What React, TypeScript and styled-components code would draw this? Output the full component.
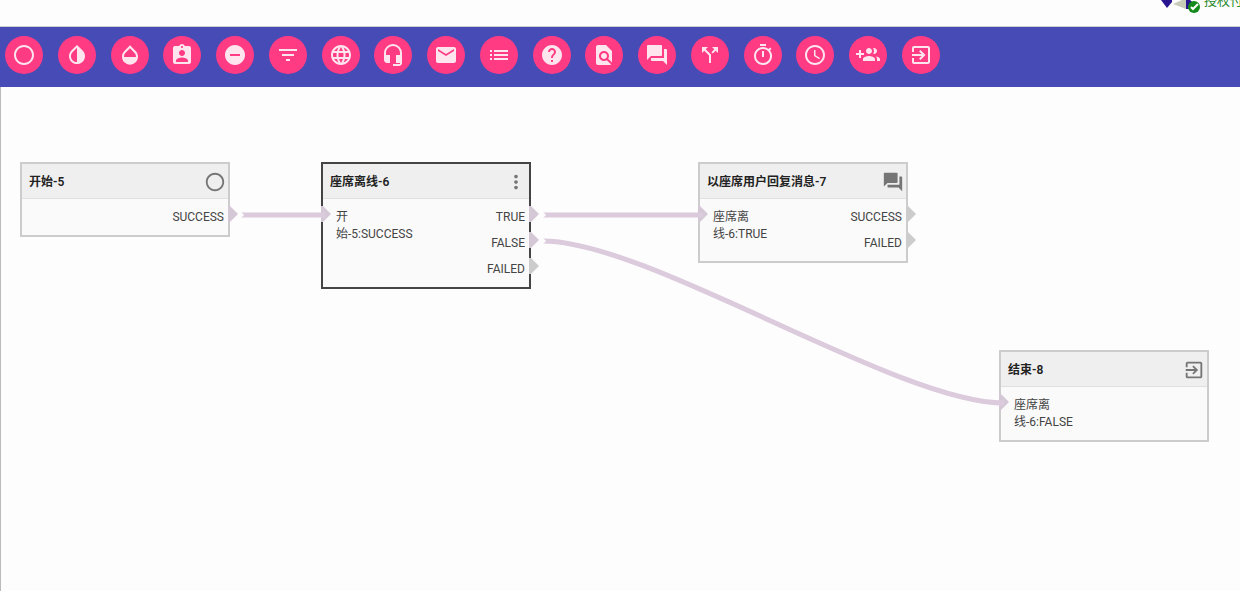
import React from "react";
import styled, { createGlobalStyle } from "styled-components";
import type { IconType } from "react-icons";
import {
  MdAssignmentInd,
  MdCallSplit,
  MdEmail,
  MdExitToApp,
  MdFilterList,
  MdFindInPage,
  MdHeadsetMic,
  MdHelp,
  MdInvertColors,
  MdLanguage,
  MdList,
  MdMoreVert,
  MdOpacity,
  MdOutlineTimer,
  MdPanoramaFishEye,
  MdQuestionAnswer,
  MdRemoveCircle,
  MdSchedule,
} from "react-icons/md";

const GlobalStyle = createGlobalStyle`
  * { box-sizing: border-box; }
  body {
    margin: 0;
    background: #fdfdfd;
    color: #444;
    font: 12px/17px Roboto, "Noto Sans CJK SC", sans-serif;
  }
`;

const Page = styled.div`
  display: flex;
  flex-direction: column;
  min-height: 100vh;
`;

const Header = styled.header`
  display: flex;
  justify-content: flex-end;
  height: 27px;
  overflow: hidden;
  border-bottom: 1px solid #cfcfcf;
`;

const Account = styled.div`
  display: flex;
  align-items: flex-start;
  width: 80px;
  overflow: hidden;
  white-space: nowrap;
`;

const Logo = styled.svg`
  flex: none;
  width: 44px;
  height: 14px;
`;

const License = styled.a`
  flex: none;
  margin-top: -8px;
  color: #2c8a2c;
  font-size: 13px;
  text-decoration: none;
`;

const Toolbar = styled.nav`
  background: #464bb5;
  padding: 9px 5px 13px;
`;

const Tools = styled.div`
  display: flex;
  justify-content: space-between;
  max-width: 935px;
`;

const ToolButton = styled.button`
  display: grid;
  place-items: center;
  width: 38px;
  height: 38px;
  padding: 0;
  border: 0;
  border-radius: 50%;
  background: #ff3b84;
  color: #ffe5ee;
  font-size: 24px;
  cursor: pointer;
`;

const Canvas = styled.main`
  position: relative;
  flex: 1;
  overflow: hidden;
  border-left: 1px solid #bbb;
`;

const Links = styled.svg`
  position: absolute;
  inset: 0;
  width: 100%;
  height: 100%;
  pointer-events: none;
  fill: none;
  stroke: #dccadd;
  stroke-width: 5;
`;

const Notch = styled.path`
  fill: #fdfdfd;
  stroke: none;
`;

const Node = styled.section<{ $x: number; $y: number; $selected?: boolean }>`
  position: absolute;
  left: ${(p) => p.$x}px;
  top: ${(p) => p.$y}px;
  width: 210px;
  border: 2px solid ${(p) => (p.$selected ? "#444" : "#ccc")};
  background: #fafafa;
`;

const NodeHeader = styled.header`
  display: flex;
  align-items: center;
  justify-content: space-between;
  height: 35px;
  padding: 1px 2px 0 7px;
  border-bottom: 1px solid #e0e0e0;
  background: #efefef;
  color: #757575;
  font-size: 22px;
`;

const Title = styled.h2`
  margin: 0;
  padding-top: 1px;
  color: #222;
  font-size: 12px;
  line-height: 17px;
  font-weight: 600;
`;

const Body = styled.div`
  display: flex;
  justify-content: space-between;
  padding: 5px 0;
`;

const Inputs = styled.ul`
  margin: 0;
  padding: 5px 0 4px;
  list-style: none;
`;

const Outputs = styled.ul`
  margin: 0;
  padding: 0;
  list-style: none;
`;

const Input = styled.li`
  position: relative;
  width: 92px;
  padding-left: 13px;
`;

const Output = styled.li`
  position: relative;
  padding-right: 4px;
  line-height: 26px;
  text-align: right;
`;

const Port = styled.i<{ $side: "in" | "out"; $linked?: boolean }>`
  position: absolute;
  top: ${(p) => (p.$side === "in" ? "-3px" : "2px")};
  ${(p) => (p.$side === "in" ? "left: -2px" : "right: -10px")};
  width: 10px;
  height: 16px;
  background: ${(p) => (p.$linked ? "#d5c8d6" : "#ccc")};
  clip-path: polygon(0 0, 2px 0, 100% 50%, 2px 100%, 0 100%);
`;

const GroupAdd: IconType = () => (
  <svg viewBox="0 0 24 24" width="1em" height="1em" fill="currentColor">
    <path d="M8 10H5V7H3v3H0v2h3v3h2v-3h3v-2zm10 1c1.66 0 2.99-1.34 2.99-3S19.66 5 18 5c-.32 0-.63.05-.91.14.57.81.9 1.79.9 2.86s-.34 2.04-.9 2.86c.28.09.59.14.91.14zm-5 0c1.66 0 2.99-1.34 2.99-3S14.66 5 13 5c-1.66 0-3 1.34-3 3s1.34 3 3 3zm6.62 2.16c.83.73 1.38 1.66 1.38 2.84v2h3v-2c0-1.54-2.37-2.49-4.38-2.84zM13 13c-2 0-6 1-6 3v2h12v-2c0-2-4-3-6-3z" />
  </svg>
);

const tools: [string, IconType][] = [
  ["开始", MdPanoramaFishEye],
  ["反转", MdInvertColors],
  ["透明", MdOpacity],
  ["分配", MdAssignmentInd],
  ["离线", MdRemoveCircle],
  ["过滤", MdFilterList],
  ["网络", MdLanguage],
  ["座席", MdHeadsetMic],
  ["邮件", MdEmail],
  ["列表", MdList],
  ["帮助", MdHelp],
  ["查找", MdFindInPage],
  ["回复消息", MdQuestionAnswer],
  ["分支", MdCallSplit],
  ["计时", MdOutlineTimer],
  ["时间", MdSchedule],
  ["添加用户", GroupAdd],
  ["结束", MdExitToApp],
];

type NodeData = {
  title: string;
  icon: IconType;
  x: number;
  y: number;
  selected?: boolean;
  input?: string;
  outputs: { name: string; linked?: boolean }[];
};

const nodes: NodeData[] = [
  { title: "开始-5", icon: MdPanoramaFishEye, x: 19, y: 75, outputs: [{ name: "SUCCESS", linked: true }] },
  {
    title: "座席离线-6",
    icon: MdMoreVert,
    x: 320,
    y: 75,
    selected: true,
    input: "开始-5:SUCCESS",
    outputs: [{ name: "TRUE", linked: true }, { name: "FALSE", linked: true }, { name: "FAILED" }],
  },
  {
    title: "以座席用户回复消息-7",
    icon: MdQuestionAnswer,
    x: 697,
    y: 75,
    input: "座席离线-6:TRUE",
    outputs: [{ name: "SUCCESS" }, { name: "FAILED" }],
  },
  { title: "结束-8", icon: MdExitToApp, x: 998, y: 263, input: "座席离线-6:FALSE", outputs: [] },
];

export default function App() {
  return (
    <Page>
      <GlobalStyle />
      <Header>
        <Account>
          <Logo viewBox="0 0 44 14" aria-hidden="true">
            <path d="M1 0h11v2L7 8z" fill="#2a1590" />
            <path d="M13 4l9-4h4v9z" fill="#c9cbb9" />
            <path d="M26 0h4l6 5-5 4h-5z" fill="#2a1590" />
            <circle cx="34" cy="7" r="6" fill="#138a1b" />
            <path d="M31 7l2 2 5-5" fill="none" stroke="#fff" strokeWidth="2" />
          </Logo>
          <License href="#">授权付费</License>
        </Account>
      </Header>
      <Toolbar>
        <Tools>
          {tools.map(([label, Icon]) => (
            <ToolButton key={label} type="button" aria-label={label}>
              <Icon />
            </ToolButton>
          ))}
        </Tools>
      </Toolbar>
      <Canvas>
        {nodes.map(({ title, icon: Icon, x, y, selected, input, outputs }) => (
          <Node key={title} $x={x} $y={y} $selected={selected}>
            <NodeHeader>
              <Title>{title}</Title>
              <Icon />
            </NodeHeader>
            <Body>
              <Inputs>
                {input && (
                  <Input>
                    <Port $side="in" $linked />
                    {input}
                  </Input>
                )}
              </Inputs>
              <Outputs>
                {outputs.map((o) => (
                  <Output key={o.name}>
                    {o.name}
                    <Port $side="out" $linked={o.linked} />
                  </Output>
                ))}
              </Outputs>
            </Body>
          </Node>
        ))}
        <Links>
          <path d="M240 128H324" />
          <path d="M542 128H702" />
          <path d="M542 154C648 154 896 316 1003 316" />
          <Notch d="M240 125l3 3-3 3z" />
          <Notch d="M542 125l3 3-3 3z" />
          <Notch d="M542 151l3 3-3 3z" />
        </Links>
      </Canvas>
    </Page>
  );
}
